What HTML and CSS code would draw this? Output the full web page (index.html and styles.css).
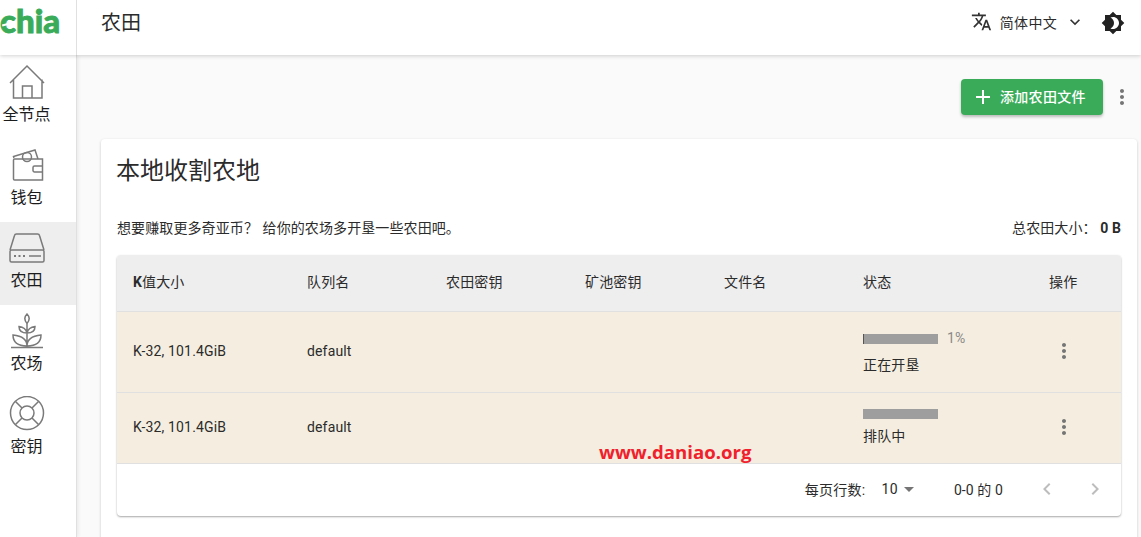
FILE: index.html
```html
<!DOCTYPE html>
<html lang="zh-CN">
  <head>
    <meta charset="UTF-8" />
    <title>农田</title>
    <link rel="stylesheet" href="styles.css">
  </head>

  <body>
    <header class="topbar">
      <div class="logo"><span class="logo-text">chia</span><span class="logo-cut"></span></div>
      <div class="topbar-main">
        <h1 class="page-title">农田</h1>
        <div class="lang">
          <svg class="lang-icon" viewBox="0 0 24 24"><path d="M12.87 15.07l-2.54-2.51.03-.03c1.74-1.94 2.98-4.17 3.71-6.53H17V4h-7V2H8v2H1v1.99h11.17C11.5 7.92 10.44 9.75 9 11.35 8.07 10.32 7.3 9.19 6.69 8h-2c.73 1.63 1.73 3.17 2.98 4.56l-5.09 5.02L4 19l5-5 3.11 3.11.76-2.04zM18.5 10h-2L12 22h2l1.12-3h4.75L21 22h2l-4.5-12zm-2.62 7l1.62-4.33L19.12 17h-3.24z"/></svg>
          <span class="lang-name">简体中文</span>
          <svg class="lang-arrow" viewBox="0 0 24 24"><path d="M7.41 8.59L12 13.17l4.59-4.58L18 10l-6 6-6-6z"/></svg>
        </div>
        <svg class="theme-icon" viewBox="0 0 24 24"><path d="M20 8.69V4h-4.69L12 .69 8.69 4H4v4.69L.69 12 4 15.31V20h4.69L12 23.31 15.31 20H20v-4.69L23.31 12 20 8.69zM12 18c-.89 0-1.74-.2-2.5-.55C11.56 16.5 13 14.42 13 12s-1.44-4.5-3.5-5.45C10.26 6.2 11.11 6 12 6c3.31 0 6 2.69 6 6s-2.69 6-6 6z"/></svg>
      </div>
    </header>

    <div class="layout">
      <nav class="sidebar">
        <a class="nav-item">
          <svg class="nav-icon" viewBox="0 0 36 36"><path d="M1 19 18 2l17 17M4.500 15.500V34h28.500V15.500M13.500 34V22h9.500v12"/></svg>
          <span>全节点</span>
        </a>
        <a class="nav-item">
          <svg class="nav-icon" viewBox="0 0 36 36"><path d="M5 11 4.500 9.500 26 3l3 9M5.500 12h28v21h-28a1 1 0 0 1-1-1V13a1 1 0 0 1 1-1zM33.500 19h-8a1.500 1.500 0 0 0-1.500 1.500v3a1.500 1.500 0 0 0 1.500 1.500h8"/><circle cx="18" cy="10" r="4.500"/></svg>
          <span>钱包</span>
        </a>
        <a class="nav-item active">
          <svg class="nav-icon" viewBox="0 0 36 36"><path d="M1 20 5.500 5.500a2 2 0 0 1 2-1.500h21a2 2 0 0 1 2 1.500L35 20M2.500 20h31a1.500 1.500 0 0 1 1.500 1.500v9a1.500 1.500 0 0 1-1.500 1.500h-31A1.500 1.500 0 0 1 1 30.500v-9A1.500 1.500 0 0 1 2.500 20zM20 26h12"/><path class="dots" d="M5 26h2M9.500 26h2M14 26h2"/></svg>
          <span>农田</span>
        </a>
        <a class="nav-item">
          <svg class="nav-icon" viewBox="0 0 36 36"><path d="M18 1c-2.500 2.500-3 6 0 9.500 3-3.500 2.500-7 0-9.500zM18 10.500V33M18 20c-1-4-4-6-8-6.500 0 4 3 6.500 8 6.500zM18 20c1-4 4-6 8-6.500 0 4-3 6.500-8 6.500zM18 33c0-6-4-10-14-11 0 7 5 11 14 11zM18 33c0-6 4-10 14-11 0 7-5 11-14 11zM2 34.500h32"/></svg>
          <span>农场</span>
        </a>
        <a class="nav-item">
          <svg class="nav-icon" viewBox="0 0 36 36"><circle cx="18" cy="17" r="16.500"/><circle cx="18" cy="17" r="7"/><path d="M6.500 5.500 13 12M29.500 5.500 23 12M6.500 28.500 13 22M29.500 28.500 23 22"/></svg>
          <span>密钥</span>
        </a>
      </nav>

      <main class="content">
        <div class="toolbar">
          <button class="add-btn"><svg class="plus" viewBox="0 0 24 24"><path d="M19 13h-6v6h-2v-6H5v-2h6V5h2v6h6v2z"/></svg>添加农田文件</button>
          <svg class="more more-top" viewBox="0 0 24 24"><path d="M12 8c1.100 0 2-.9 2-2s-.9-2-2-2-2 .9-2 2 .9 2 2 2zm0 2c-1.100 0-2 .9-2 2s.9 2 2 2 2-.9 2-2-.9-2-2-2zm0 6c-1.100 0-2 .9-2 2s.9 2 2 2 2-.9 2-2-.9-2-2-2z"/></svg>
        </div>

        <section class="card">
          <h2 class="card-title">本地收割农地</h2>
          <div class="summary">
            <p class="summary-hint">想要赚取更多奇亚币？ 给你的农场多开垦一些农田吧。</p>
            <p>总农田大小： <b>0 B</b></p>
          </div>

          <div class="table">
            <div class="row head">
              <div><b>K</b>值大小</div>
              <div>队列名</div>
              <div>农田密钥</div>
              <div>矿池密钥</div>
              <div>文件名</div>
              <div>状态</div>
              <div>操作</div>
            </div>

            <div class="row plot plot-first">
              <div>K-32, 101.4GiB</div>
              <div>default</div>
              <div></div>
              <div></div>
              <div></div>
              <div class="state">
                <div class="progress-line">
                  <div class="bar"><div class="bar-fill" style="width: 1%"></div></div>
                  <span class="percent">1%</span>
                </div>
                <div class="state-name">正在开垦</div>
              </div>
              <div>
                <svg class="more" viewBox="0 0 24 24"><path d="M12 8c1.100 0 2-.9 2-2s-.9-2-2-2-2 .9-2 2 .9 2 2 2zm0 2c-1.100 0-2 .9-2 2s.9 2 2 2 2-.9 2-2-.9-2-2-2zm0 6c-1.100 0-2 .9-2 2s.9 2 2 2 2-.9 2-2-.9-2-2-2z"/></svg>
              </div>
            </div>

            <div class="row plot plot-second">
              <div>K-32, 101.4GiB</div>
              <div>default</div>
              <div></div>
              <div></div>
              <div></div>
              <div class="state">
                <div class="bar"></div>
                <div class="state-name">排队中</div>
              </div>
              <div>
                <svg class="more" viewBox="0 0 24 24"><path d="M12 8c1.100 0 2-.9 2-2s-.9-2-2-2-2 .9-2 2 .9 2 2 2zm0 2c-1.100 0-2 .9-2 2s.9 2 2 2 2-.9 2-2-.9-2-2-2zm0 6c-1.100 0-2 .9-2 2s.9 2 2 2 2-.9 2-2-.9-2-2-2z"/></svg>
              </div>
            </div>

            <div class="pager">
              <span>每页行数:</span>
              <span class="pager-size">10<svg class="caret" viewBox="0 0 24 24"><path d="M7 10l5 5 5-5z"/></svg></span>
              <span class="pager-range">0-0 的 0</span>
              <svg class="pager-arrow" viewBox="0 0 24 24"><path d="M15.410 7.410 14 6l-6 6 6 6 1.410-1.410L10.830 12z"/></svg>
              <svg class="pager-arrow" viewBox="0 0 24 24"><path d="M10 6 8.590 7.410 13.170 12l-4.580 4.590L10 18l6-6z"/></svg>
            </div>
          </div>
        </section>
      </main>
    </div>

    <div class="watermark">www.daniao.org</div>
  </body>
</html>
```

FILE: styles.css
```css
* {
  box-sizing: border-box;
}

html,
body {
  height: 100%;
}

body {
  margin: 0;
  overflow: hidden;
  position: relative;
  background-color: #fafafa;
  color: #2b2b2b;
  font-family: Roboto, "Noto Sans CJK SC", sans-serif;
  font-size: 14px;
}

p,
h1,
h2 {
  margin: 0;
  font-weight: 400;
}

.topbar {
  position: relative;
  z-index: 2;
  display: flex;
  height: 55px;
  background-color: #fff;
  box-shadow: 0 1px 4px rgba(0, 0, 0, 0.18);
}

.logo {
  position: relative;
  width: 77px;
  flex-shrink: 0;
  overflow: hidden;
  border-right: 1px solid #e0e0e0;
}

.logo-text {
  display: block;
  margin-top: -3px;
  color: #3aac59;
  font-family: Lato, sans-serif;
  font-size: 33px;
  font-weight: 900;
  letter-spacing: 0;
  line-height: 46px;
  -webkit-text-stroke: 0.9px #3aac59;
}

/* white notch across the c of the logo */
.logo-cut {
  position: absolute;
  left: 2px;
  top: 23px;
  width: 12px;
  height: 2px;
  background-color: #fff;
  transform: rotate(-14deg);
}

.topbar-main {
  flex: 1;
  display: flex;
  align-items: center;
  padding: 0 16px 10px 24px;
}

.page-title {
  flex: 1;
  margin-bottom: 2px;
  font-size: 20px;
}

.lang {
  display: flex;
  align-items: center;
  margin-bottom: 2px;
}

.lang-icon {
  width: 21px;
  height: 21px;
  fill: #333;
}

.lang-name {
  margin-left: 8px;
  font-size: 14px;
  letter-spacing: 0.3px;
}

.lang-arrow {
  width: 20px;
  height: 20px;
  margin-left: 8px;
  margin-right: 2px;
  fill: #333;
}

.theme-icon {
  width: 24px;
  height: 24px;
  margin-left: 14px;
  fill: #222;
}

.layout {
  display: flex;
  height: 482px;
}

.sidebar {
  width: 77px;
  flex-shrink: 0;
  padding-top: 1px;
  background-color: #fff;
  border-right: 1px solid #e0e0e0;
  box-shadow: 1px 0 4px rgba(0, 0, 0, 0.08);
}

.nav-item {
  display: flex;
  flex-direction: column;
  align-items: center;
  height: 83px;
  padding: 8px 23px 0 0;
  color: #1c1c1c;
  font-size: 16px;
  line-height: 24px;
}

.nav-item.active {
  background-color: #eee;
}

.nav-icon {
  width: 36px;
  height: 36px;
  margin-bottom: 3px;
  fill: none;
  stroke: #7a7a7a;
  stroke-width: 1.5;
}

.dots {
  stroke-width: 2;
}

.content {
  flex: 1;
  padding: 24px 4px 0 24px;
  overflow: hidden;
}

.toolbar {
  display: flex;
  justify-content: flex-end;
  align-items: center;
  height: 36px;
  margin-bottom: 24px;
  padding-right: 3px;
}

.add-btn {
  display: flex;
  align-items: center;
  height: 36px;
  width: 142px;
  padding: 0 0 2px 10px;
  border: 0;
  border-radius: 4px;
  background-color: #3aac59;
  color: #fff;
  font-family: inherit;
  font-size: 14px;
  font-weight: 500;
  letter-spacing: 0.3px;
  box-shadow: 0 2px 3px rgba(0, 0, 0, 0.25);
}

.plus {
  width: 24px;
  height: 24px;
  margin: 2px 5px 0 0;
  fill: #fff;
}

.more {
  display: block;
  width: 24px;
  height: 24px;
  fill: #757575;
}

.more-top {
  margin-left: 7px;
}

.card {
  height: 420px;
  padding: 16px;
  background-color: #fff;
  border-radius: 4px;
  box-shadow: 0 1px 3px rgba(0, 0, 0, 0.2);
}

.card-title {
  margin-left: -1px;
  font-size: 24px;
  line-height: 32px;
}

.summary {
  display: flex;
  justify-content: space-between;
  margin-top: 31px;
  margin-bottom: 17px;
  line-height: 20px;
  letter-spacing: 0.1px;
}

.summary-hint {
  word-spacing: 1px;
}

.table {
  border-radius: 4px;
  background-color: #fff;
  box-shadow: 0 1px 2px rgba(0, 0, 0, 0.35);
}

.row {
  display: grid;
  grid-template-columns: 174px 139px 139px 139px 139px 186px 88px;
  align-items: center;
  padding-left: 16px;
  letter-spacing: 0.15px;
  border-bottom: 1px solid #e0e0e0;
}

.row > div {
  margin-right: -16px;
}

.head {
  height: 57px;
  padding-bottom: 4px;
  background-color: #eee;
  border-radius: 4px 4px 0 0;
}

.plot {
  padding-bottom: 2px;
  background-color: #f5eee0;
}

.plot-first {
  height: 81px;
}

.plot-first .state {
  padding-top: 2px;
}

.plot-first .state-name {
  margin-top: 7px;
}

.plot-second {
  height: 71px;
}

.plot-second .state {
  padding-top: 1px;
}

.plot-second .state-name {
  margin-top: 7px;
}

.plot .more {
  margin-left: 3px;
}

.progress-line {
  display: flex;
  align-items: center;
}

.bar {
  width: 75px;
  height: 10px;
  background-color: #9e9e9e;
}

.bar-fill {
  height: 100%;
  background-color: #555;
}

.percent {
  margin-left: 9px;
  margin-bottom: 2px;
  font-size: 14px;
  color: #8a8a8a;
}

.state-name {
  line-height: 20px;
}

.pager {
  display: flex;
  align-items: center;
  height: 52px;
  padding: 0 14px 2px 0;
  justify-content: flex-end;
  letter-spacing: 0.3px;
}

.pager-size {
  display: flex;
  align-items: center;
  margin-left: 16px;
}

.caret {
  width: 24px;
  height: 24px;
  margin-left: -1px;
  fill: #757575;
}

.pager-range {
  margin-left: 33px;
  margin-right: 32px;
  letter-spacing: 0.1px;
}

.pager-arrow {
  width: 24px;
  height: 24px;
  fill: #bdbdbd;
}

.pager-arrow + .pager-arrow {
  margin-left: 24px;
}

.watermark {
  position: absolute;
  left: 599px;
  top: 439px;
  color: #f0202c;
  font-family: "Open Sans", sans-serif;
  font-size: 18.6px;
  font-weight: 700;
  line-height: 26px;
}
```
